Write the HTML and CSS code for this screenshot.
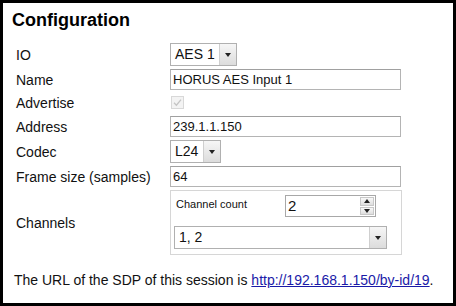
FILE: index.html
```html
<!doctype html>
<html lang="en">

<head>
  <meta charset="UTF-8">
  <title>Configuration</title>
  <link rel="stylesheet" href="styles.css">
</head>

<body>
  <div class="panel">
    <h2 class="title">Configuration</h2>

    <div class="form">
      <div class="lbl">IO</div>
      <div class="ctl">
        <div class="sel sel-io"><span class="sel-text">AES 1</span><span class="sel-btn"><i class="tri"></i></span></div>
      </div>

      <div class="lbl">Name</div>
      <div class="ctl"><input class="txt" type="text" value="HORUS AES Input 1"></div>

      <div class="lbl">Advertise</div>
      <div class="ctl">
        <span class="chk">
          <svg width="13" height="13" viewBox="0 0 13 13">
            <path d="M3 6.8 L5.4 9.2 L10 3.6" fill="none" stroke="#c4c4c4" stroke-width="1.3"/>
          </svg>
        </span>
      </div>

      <div class="lbl">Address</div>
      <div class="ctl"><input class="txt" type="text" value="239.1.1.150"></div>

      <div class="lbl">Codec</div>
      <div class="ctl">
        <div class="sel sel-codec"><span class="sel-text">L24</span><span class="sel-btn"><i class="tri"></i></span></div>
      </div>

      <div class="lbl">Frame size (samples)</div>
      <div class="ctl"><input class="txt" type="text" value="64"></div>

      <div class="lbl">Channels</div>
      <div class="ctl">
        <div class="chbox">
          <div class="count-row">
            <span class="count-lbl">Channel count</span>
            <div class="num">
              <span class="num-text">2</span>
              <span class="spin">
                <span class="spin-btn"><i class="tri up"></i></span>
                <span class="spin-btn"><i class="tri"></i></span>
              </span>
            </div>
          </div>
          <div class="sel sel-ch"><span class="sel-text">1, 2</span><span class="sel-btn"><i class="tri"></i></span></div>
        </div>
      </div>
    </div>

    <p class="note">The URL of the SDP of this session is <a href="#">http://192.168.1.150/by-id/19</a>.</p>
  </div>
</body>

</html>
```

FILE: styles.css
```css
* {
  margin: 0;
  padding: 0;
  box-sizing: border-box;
}

body {
  font-family: "Liberation Sans", Arial, sans-serif;
  font-size: 14px;
  color: #111;
  background: #fff;
}

.panel {
  width: 456px;
  height: 306px;
  border: 3px solid #000;
  padding: 6px 0 0 9px;
}

.title {
  font-size: 18px;
  line-height: 22px;
  font-weight: bold;
  color: #000;
}

.form {
  display: grid;
  grid-template-columns: 154px 234px;
  row-gap: 3px;
  align-items: center;
  margin: 12px 0 0 4px;
}

.lbl {
  line-height: 16px;
}

.ctl {
  display: flex;
}

/* text inputs */
.txt {
  width: 231px;
  height: 21px;
  border: 1px solid #b4b4b4;
  border-top-color: #a0a0a0;
  font: 13px "Liberation Sans", Arial, sans-serif;
  color: #111;
  padding: 0 2px;
  background: #fff;
}

/* fake selects */
.sel {
  display: flex;
  height: 23px;
  border: 1px solid #b0b0b0;
  background: #fff;
}

.sel-text {
  flex: 1;
  padding: 0 0 0 4px;
  line-height: 21px;
  font-size: 14px;
}

.sel-btn {
  width: 17px;
  border-left: 1px solid #cfcfcf;
  background: linear-gradient(#f6f6f6, #dcdcdc);
  display: flex;
  align-items: center;
  justify-content: center;
}

.tri {
  width: 0;
  height: 0;
  border-left: 3.5px solid transparent;
  border-right: 3.5px solid transparent;
  border-top: 4px solid #222;
}

.tri.up {
  border-top: 0;
  border-bottom: 4px solid #222;
}

.sel-io {
  width: 67px;
}

.sel-codec {
  width: 51px;
}

.sel-ch {
  width: 213px;
  margin-top: 9px;
}

/* checkbox (disabled, checked) */
.chk {
  display: block;
  width: 13px;
  height: 13px;
  border: 1px solid #d8d8d8;
  background: #f3f3f3;
  margin: 3px 0 4px 1px;
}

.chk svg {
  display: block;
  margin: -1px;
}

/* channels block */
.chbox {
  width: 232px;
  height: 65px;
  border: 1px solid #d6d6d6;
  padding: 4px 0 0 3px;
}

.count-row {
  display: flex;
  align-items: flex-start;
}

.count-lbl {
  width: 111px;
  font-size: 11px;
  line-height: 12px;
  padding: 3px 0 0 2px;
}

.num {
  display: flex;
  width: 91px;
  height: 22px;
  border: 1px solid #a8a8a8;
  background: #fff;
}

.num-text {
  flex: 1;
  padding-left: 2px;
  font-size: 15px;
  line-height: 20px;
}

.spin {
  width: 15px;
  display: flex;
  flex-direction: column;
  padding: 1px 1px 1px 0;
  gap: 1px;
}

.spin-btn {
  flex: 1;
  border: 1px solid #c8c8c8;
  background: linear-gradient(#f8f8f8, #dedede);
  display: flex;
  align-items: center;
  justify-content: center;
}

.note {
  margin: 17px 0 0 2px;
  line-height: 16px;
}

.note a {
  color: #1a1aa8;
}
```
